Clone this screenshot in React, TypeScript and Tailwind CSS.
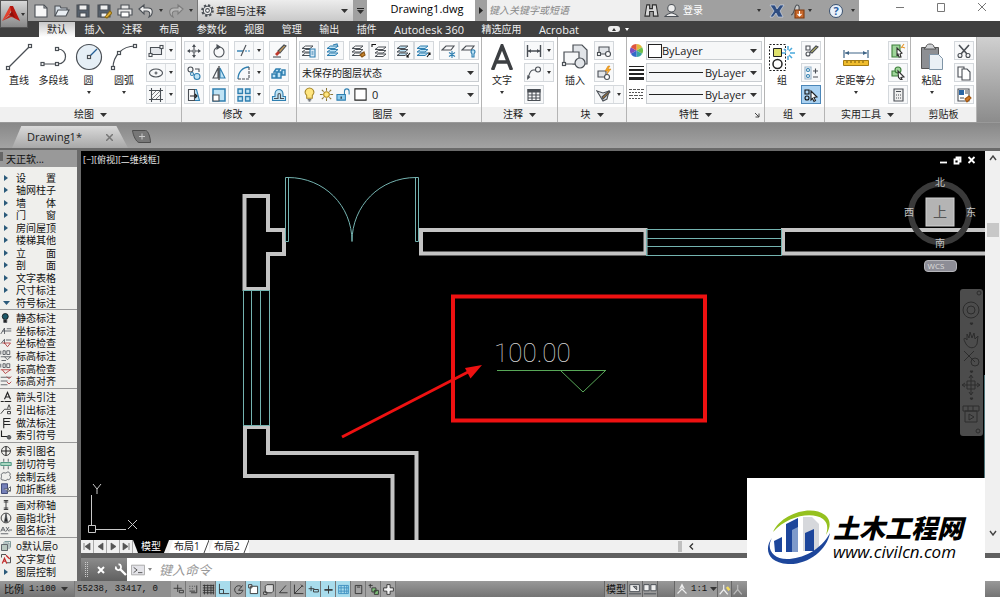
import type { ReactNode } from 'react';
import clsx from 'clsx';

const MENU = ['设　　置', '轴网柱子', '墙　　体', '门　　窗', '房间屋顶', '楼梯其他', '立　　面', '剖　　面', '文字表格', '尺寸标注', '符号标注'];

const INK = '#4a4f55';
const BLUE = '#2f7fb0';
const PALE = '#bfe3f5';

type IconProps = { children: ReactNode; size?: number; className?: string };

const Icon = ({ children, size = 16, className }: IconProps) => (
  <svg
    width={size}
    height={size}
    viewBox="0 0 16 16"
    fill="none"
    stroke={INK}
    strokeWidth={1.1}
    aria-hidden="true"
    className={clsx('shrink-0', className)}
  >
    {children}
  </svg>
);

const Caret = ({ className = 'text-[#333]' }: { className?: string }) => (
  <svg width="7" height="4" viewBox="0 0 7 4" aria-hidden="true" className={clsx('shrink-0', className)}>
    <path d="M0 0h7L3.5 4z" fill="currentColor" />
  </svg>
);

const TinyCaret = ({ className = 'text-[#333]' }: { className?: string }) => (
  <svg width="4" height="3" viewBox="0 0 4 3" aria-hidden="true" className={clsx('shrink-0', className)}>
    <path d="M0 0h4L2 3z" fill="currentColor" />
  </svg>
);

const Layers = ({ fill = '#fff', stroke = INK }: { fill?: string; stroke?: string }) => (
  <g stroke={stroke} fill={fill} strokeWidth={1}>
    <path d="M1 12.500 4.500 10H12l-3 2.500z" />
    <path d="M1 9 4.500 6.500H12L9 9z" />
    <path d="M1 5.500 4.500 3H12L9 5.500z" />
  </g>
);

/* ---------- ribbon building blocks ---------- */

const Panel = ({ title, width, children, more = true, corner = false }: { title: string; width: string; children: ReactNode; more?: boolean; corner?: boolean }) => (
  <section className={clsx('flex shrink-0 flex-col border-r border-[#b4b4b4] bg-white', width)}>
    <div className="flex h-[70px] gap-1 px-[2px] pt-1">{children}</div>
    <button type="button" className="relative flex h-[15px] items-center justify-center gap-[6px] bg-[#f0f0f0] text-[10px] leading-[15px]">
      {title}
      {more && <Caret />}
      {corner && (
        <svg width="6" height="6" viewBox="0 0 6 6" className="absolute right-1" fill="none" stroke="#444" aria-hidden="true">
          <path d="M1 1l4 4M5 1.500V5H1.500" />
        </svg>
      )}
    </button>
  </section>
);

const BigButton = ({ label, icon, width, caret = false }: { label: string; icon: ReactNode; width: string; caret?: boolean }) => (
  <button type="button" className={clsx('flex shrink-0 flex-col items-center whitespace-nowrap', width)}>
    <span className="flex h-[32px] items-center">{icon}</span>
    <span className="text-[10px] leading-[14px]">{label}</span>
    {caret && <TinyCaret className="mt-1 text-[#333]" />}
  </button>
);

const Tool = ({ label, icon, caret = false, active = false }: { label: string; icon: ReactNode; caret?: boolean; active?: boolean }) => (
  <button
    type="button"
    aria-label={label}
    className={clsx(
      'flex h-[19px] shrink-0 border',
      active ? 'border-[#4b86b8] bg-[#a9d1f1]' : 'border-[#d4d8dc] bg-[#f8f9fa]',
    )}
  >
    <span className="flex h-full w-[18px] items-center justify-center">{icon}</span>
    {caret && (
      <span className="flex h-full w-[10px] items-center justify-center border-l border-[#dcdfe2]">
        <TinyCaret />
      </span>
    )}
  </button>
);

const Column = ({ children }: { children: ReactNode }) => <div className="flex flex-col items-start gap-[3px]">{children}</div>;

const Combo = ({ label, value, before, className }: { label: string; value: string; before?: ReactNode; className?: string }) => (
  <label className={clsx('flex h-[19px] items-center border border-[#c9cdd1] bg-[#f6f7f8] pr-1', className)}>
    {before}
    <select
      aria-label={label}
      className={clsx(
        'min-w-0 flex-1 appearance-none bg-transparent leading-[16px] outline-none',
        value.charCodeAt(0) < 128 ? 'text-[11px]' : 'text-[10px]',
      )}
    >
      <option>{value}</option>
    </select>
    <Caret />
  </label>
);

const Knob = ({ x, y }: { x: number; y: number }) => <rect x={x - 1.5} y={y - 1.5} width="3" height="3" fill="#fff" />;

const DrawPanel = () => (
  <Panel title="绘图" width="w-[182px]">
    <div className="flex">
      <BigButton
        label="直线"
        width="w-[34px]"
        icon={
          <svg width="28" height="28" fill="none" stroke={INK} strokeWidth="1.200" aria-hidden="true">
            <path d="M3 25 25 3" />
            <Knob x={3} y={25} />
            <Knob x={25} y={3} />
          </svg>
        }
      />
      <BigButton
        label="多段线"
        width="w-[35px]"
        icon={
          <svg width="28" height="28" fill="none" stroke={INK} strokeWidth="1.200" aria-hidden="true">
            <path d="M2 21h16c10 0 10-15 0-15" />
            <Knob x={2.5} y={21} />
            <Knob x={17} y={21} />
            <Knob x={17} y={6} />
          </svg>
        }
      />
      <BigButton
        label="圆"
        width="w-[35px]"
        caret
        icon={
          <svg width="28" height="28" fill="none" stroke={INK} strokeWidth="1.200" aria-hidden="true">
            <circle cx="14" cy="14" r="12.500" fill="#e6eff6" />
            <path d="m14 14 8-8" stroke="#245f96" />
            <Knob x={14} y={14} />
          </svg>
        }
      />
      <BigButton
        label="圆弧"
        width="w-[36px]"
        caret
        icon={
          <svg width="28" height="28" fill="none" stroke={INK} strokeWidth="1.200" aria-hidden="true">
            <path d="M3 25C3 13 12 3 25 3" />
            <Knob x={3} y={25} />
            <Knob x={9} y={10} />
            <Knob x={25} y={3} />
          </svg>
        }
      />
    </div>
    <Column>
      <Tool label="矩形" caret icon={<Icon><path d="M2.500 4.500h11v7h-11z" fill="#e3e6ea" /><Knob x={2.5} y={12} /><Knob x={13.5} y={4} /></Icon>} />
      <Tool label="椭圆" caret icon={<Icon><ellipse cx="8" cy="8" rx="6.500" ry="4" /><path d="M8 6.500v3M6.500 8h3" /></Icon>} />
      <Tool label="图案填充" caret icon={<Icon><path d="M1 3.500h14M1 12.500h14M3.500 1v14M12.500 1v14" /><path d="m4 8 4-4M4 12l8-8M8 12l4-4" strokeWidth=".7" /></Icon>} />
    </Column>
  </Panel>
);

const ModifyPanel = () => (
  <Panel title="修改" width="w-[115px]">
    <div className="flex gap-[5px]">
      <Column>
        <Tool label="移动" icon={<Icon><path d="M8 2v12M2 8h12" strokeDasharray="4 4" /><path d="M8 1 6 4h4zM8 15l-2-3h4zM1 8l3-2v4zM15 8l-3-2v4z" fill={INK} stroke="none" /><circle cx="8" cy="8" r="1.300" /></Icon>} />
        <Tool label="复制" icon={<Icon><circle cx="4.500" cy="4.500" r="2.500" /><circle cx="6" cy="9" r="1.500" stroke={BLUE} /><circle cx="11" cy="11.500" r="3" stroke={BLUE} fill={PALE} /><path d="M9 4h4v3" /></Icon>} />
        <Tool label="拉伸" icon={<Icon><path d="M8.500 2.500h2l3 11h-5" stroke={BLUE} fill={PALE} /><path d="M2.500 2.500h6v11h-6z" /><path d="M4 9h7M9 7l2 2-2 2" stroke="#222" /></Icon>} />
      </Column>
      <Column>
        <Tool label="旋转" icon={<Icon><circle cx="8" cy="9" r="5" /><path d="m6 2 3 2-3 2z" fill={INK} /></Icon>} />
        <Tool label="镜像" icon={<Icon><path d="M7 3v10H2z" /><path d="M9 3v10h5z" stroke={BLUE} fill={PALE} /><path d="M8 1v14" stroke="#222" /></Icon>} />
        <Tool label="缩放" icon={<Icon><path d="M2 2h12v12H2z" fill={PALE} stroke={BLUE} strokeWidth="1.500" /><path d="M2 8h6v6H2z" fill="#fff" /></Icon>} />
      </Column>
      <Column>
        <Tool label="修剪" caret icon={<Icon><path d="M1 8h6" stroke={BLUE} strokeWidth="1.400" /><path d="M9 8h6" stroke={BLUE} strokeDasharray="2 1" /><path d="m5 13 5-11" /></Icon>} />
        <Tool label="圆角" caret icon={<Icon><path d="M2 14C2 7 7 2 13 2" stroke={BLUE} strokeWidth="1.400" /><path d="M13 2v12H2" strokeDasharray="3 1" /></Icon>} />
        <Tool label="阵列" caret icon={<Icon><path d="M2 2h4.500v4.500H2zM2 9.500h4.500V14H2zM9.500 9.500H14V14H9.500zM9.500 2H14v4.500H9.500z" fill={PALE} stroke={BLUE} strokeWidth="1.400" /></Icon>} />
      </Column>
      <Column>
        <Tool label="删除" icon={<Icon><path d="m7 8 6-6 2 1-6 7z" fill="#c39a5b" /><path d="m4 11 3-3 2 2-3 3z" fill="#c0392b" stroke="none" /><path d="M2 14h8" /></Icon>} />
        <Tool label="分解" icon={<Icon><path d="M1 9h4v4H1zM6 7h4v6H6zM11 5h3v5h-3zM3 7l2-3h4l-2 3z" fill={PALE} stroke={BLUE} strokeWidth="1.400" /></Icon>} />
        <Tool label="偏移" icon={<Icon><path d="M1.500 13.500h13v-4H12V7c0-6-8-6-8 0v2.500H1.500z" fill={PALE} stroke={BLUE} /><path d="M3 11.500h4V8c0-2 2.500-2 2.500 0v3.500H13" stroke={INK} /></Icon>} />
      </Column>
    </div>
  </Panel>
);

const LayerPanel = () => (
  <Panel title="图层" width="w-[185px]">
    <div className="flex min-w-0 flex-1 flex-col gap-[3px]">
      <div className="flex justify-between">
        <Tool label="图层特性" icon={<Icon><Layers /><path d="M9 6h5v8H9z" fill="#dbe9f5" stroke={BLUE} /><path d="M10.500 9h2M10.500 11h2" stroke={BLUE} /></Icon>} />
        <Tool label="置为当前" icon={<Icon><Layers fill={PALE} stroke={BLUE} /><path d="m7 2 4-1 1 3" stroke={BLUE} /></Icon>} />
        <div className="flex">
          <Tool label="匹配图层" icon={<Icon><Layers /><path d="m9 12 4-3 1 3-3 2z" fill="#c9852c" stroke="#8a5514" /></Icon>} />
          <Tool label="上一个" icon={<Icon><g transform="translate(3 1)"><Layers /></g><path d="M1 1.500h4M1 1v3" stroke="#111" /></Icon>} />
        </div>
        <div className="flex">
          <Tool label="隔离" icon={<Icon><Layers fill={PALE} /><path d="m14 10-3 4M11 12v2h2" stroke="#111" /></Icon>} />
          <Tool label="取消隔离" icon={<Icon><Layers fill={PALE} stroke={BLUE} /><path d="m11 14 3-4M14 12v-2h-2" stroke="#111" /></Icon>} />
        </div>
        <div className="flex">
          <Tool label="冻结" icon={<Icon><path d="M1 7 5 3h8l-3 4z" /><path d="M11 8v7M8 9.500l6 4M14 9.500l-6 4" stroke={BLUE} /></Icon>} />
          <Tool label="关闭" icon={<Icon><path d="M1 7 5 3h8l-3 4z" /><path d="M10 9c0-3 4-3 4 0l-1 2v3h-2v-3z" fill={PALE} stroke={BLUE} /></Icon>} />
        </div>
      </div>
      <Combo label="图层状态" value="未保存的图层状态" className="pl-[2px]" />
      <Combo
        label="图层"
        value="0"
        className="pl-[2px]"
        before={
          <span className="mr-1 flex gap-[2px]">
            <Icon size={15}><path d="M5 9c-4-4 0-8 3-8s7 4 3 8v3H5z" fill="#ffe680" stroke="#a8892b" /><path d="M6 13.500h4M7 15h2" /></Icon>
            <Icon size={15}><circle cx="8" cy="8" r="3" fill="#ffe680" stroke="#b38b1d" /><path d="M8 1v3M8 12v3M1 8h3M12 8h3M3 3l2 2M11 11l2 2M13 3l-2 2M3 13l2-2" stroke="#8a7636" /></Icon>
            <Icon size={15}><path d="M1 8h9v6H1z" fill="#8ccbed" stroke={BLUE} /><path d="M9 8V5c0-4 5-4 5 0v3" stroke={BLUE} /><path d="M5.500 10v2.500" stroke="#111" /></Icon>
            <Icon size={15}><path d="M2 2h12v12H2z" fill="#fff" stroke="#222" /></Icon>
          </span>
        }
      />
    </div>
  </Panel>
);

const AnnotatePanel = () => (
  <Panel title="注释" width="w-[76px]">
    <BigButton
      label="文字"
      width="w-[36px]"
      caret
      icon={
        <svg width="22" height="26" viewBox="0 0 22 26" fill="none" stroke="#3c3f42" strokeWidth="3.500" aria-hidden="true">
          <path d="M1.500 26 11 2l9.500 24M5 18h12" />
        </svg>
      }
    />
    <Column>
      <Tool label="线性" caret icon={<Icon><path d="M1.500 2v12M14.500 2v12M2 8h12" strokeWidth="1.400" /><path d="m2 8 3-2v4zM14 8l-3-2v4z" fill={INK} stroke="none" /></Icon>} />
      <Tool label="引线" caret icon={<Icon><circle cx="12" cy="4.500" r="2.500" /><path d="M9.500 5H7c-3 0-4 5-5 8" /><path d="m1 15 .500-5 3 2z" fill={INK} stroke="none" /></Icon>} />
      <Tool label="表格" icon={<Icon><path d="M2 2.500h12v11H2zM2 8h12M2 11h12M6 5v8M10 5v8" /><path d="M2 2.500h12V5H2z" fill={INK} /></Icon>} />
    </Column>
  </Panel>
);

const BlockPanel = () => (
  <Panel title="块" width="w-[69px]">
    <BigButton
      label="插入"
      width="w-[30px]"
      icon={
        <svg width="28" height="28" fill="none" stroke={INK} strokeWidth="1.200" aria-hidden="true">
          <path d="M12 2h9l5 5v14H12z" fill="#e1e4e8" />
          <path d="M3 9h15v12H3z" fill="#f6f7f8" />
          <circle cx="19" cy="20" r="5" fill="#e1e4e8" />
          <Knob x={3} y={21} />
        </svg>
      }
    />
    <Column>
      <Tool label="创建" icon={<Icon><path d="M3 4h10v7H3z" fill="#e1e4e8" /><circle cx="12" cy="11" r="2.500" fill="#fff" /><Knob x={3} y={11} /></Icon>} />
      <Tool label="编辑" icon={<Icon><path d="M2 6h8v6H2z" fill="#e1e4e8" /><circle cx="11" cy="12" r="2.500" fill="#fff" /><path d="m12 1-3 5h3l-1 3 4-5h-3l2-3z" fill="#f5a623" stroke="#d07f10" strokeWidth=".5" /></Icon>} />
      <Tool label="编辑属性" caret icon={<Icon><path d="m1 4 6 2 6-2-2 8-4 2-3-5z" fill="#e1e4e8" /><path d="m6 10 7-6 1 1-7 7z" fill="#c9852c" /></Icon>} />
    </Column>
  </Panel>
);

const PropertiesPanel = () => (
  <Panel title="特性" width="w-[138px]" corner>
    <div className="flex min-w-0 flex-1 flex-col gap-[3px]">
      <div className="flex items-center gap-[2px]">
        <svg width="15" height="15" viewBox="0 0 16 16" aria-hidden="true" className="shrink-0">
          <path d="M8 8V1a7 7 0 0 1 6 3.500z" fill="#e2b93b" />
          <path d="m8 8 6-3.500a7 7 0 0 1 0 7z" fill="#6fbf4b" />
          <path d="m8 8 6 3.500A7 7 0 0 1 8 15z" fill="#38a3a5" />
          <path d="M8 8v7a7 7 0 0 1-6-3.500z" fill="#3369c9" />
          <path d="m8 8-6 3.500a7 7 0 0 1 0-7z" fill="#7c4fc0" />
          <path d="M8 8 2 4.500A7 7 0 0 1 8 1z" fill="#e0553c" />
        </svg>
        <Combo label="对象颜色" value="ByLayer" className="min-w-0 flex-1" before={<span className="ml-[1px] size-[14px] border border-[#222] bg-white" />} />
      </div>
      <div className="flex items-center gap-[2px]">
        <svg width="15" height="15" aria-hidden="true" className="shrink-0" fill="#222">
          <path d="M0 1h15v1H0zM0 4h15v2H0zM0 8h15v2H0zM0 12h15v3H0z" />
        </svg>
        <Combo label="线宽" value="ByLayer" className="min-w-0 flex-1" before={<span className="mx-[2px] h-px w-[54px] bg-[#222]" />} />
      </div>
      <div className="flex items-center gap-[2px]">
        <svg width="15" height="15" aria-hidden="true" className="shrink-0" stroke="#555">
          <path d="M0 2.500h15" strokeDasharray="3 1" />
          <path d="M0 5.500h15" strokeDasharray="2 1" />
          <path d="M0 8.500h15" strokeDasharray="4 1" />
          <path d="M0 11.500h15" strokeDasharray="2 1" />
        </svg>
        <Combo label="线型" value="ByLayer" className="min-w-0 flex-1" before={<span className="mx-[2px] h-px w-[54px] bg-[#222]" />} />
      </div>
    </div>
  </Panel>
);

const GroupPanel = () => (
  <Panel title="组" width="w-[60px]">
    <BigButton
      label="组"
      width="w-[30px]"
      icon={
        <svg width="30" height="30" fill="none" stroke="#222" aria-hidden="true">
          <path d="M2.500 2.500h16v26h-16z" strokeDasharray="2 1.500" />
          <path d="M6.500 6.500h8v8h-8z" fill="#dfe16b" />
          <circle cx="10.500" cy="22" r="4.500" strokeWidth="1.500" />
          <path d="M21 4v4M21 14v4M15 11h4M23 11h5M17 7l2 2M25 6l-3 3M25 16l-3-3" stroke="#4aa9dc" strokeWidth="1.500" />
        </svg>
      }
    />
    <Column>
      <Tool label="取消编组" icon={<Icon><path d="M3 3h4v4H3z" /><circle cx="5" cy="11" r="2" /><path d="m7 9 6-6 2 1-6 6z" fill="#c5c06a" /></Icon>} />
      <Tool label="组编辑" icon={<Icon><path d="M2 2h6v12H2z" stroke="#9bb5c9" /><circle cx="5" cy="5" r="1.500" stroke={BLUE} /><circle cx="5" cy="11" r="1.500" stroke={BLUE} /><path d="M10 6h5M12.500 3.500v5M10 12h5" /></Icon>} />
      <Tool label="启用组选择" active icon={<Icon><path d="M2 3h4v4H2z" stroke="#111" /><circle cx="4" cy="11" r="2" stroke="#111" /><path d="m8 4 6 6-3 .500 1.500 3-1.500 1-1.500-3L8 13z" fill="#fff" stroke="#222" /></Icon>} />
    </Column>
  </Panel>
);

const UtilityPanel = () => (
  <Panel title="实用工具" width="w-[86px]">
    <BigButton
      label="定距等分"
      width="w-[57px]"
      caret
      icon={
        <svg width="26" height="20" fill="none" stroke="#3f6587" aria-hidden="true">
          <path d="M1 3v8M25 3v8M2 6h22" strokeWidth="1.200" />
          <path d="m2 6 4-2v4zM24 6l-4-2v4z" fill="#3f6587" stroke="none" />
          <path d="M.5 13.500h25v5H.5z" fill="#f0bd2d" stroke="#a57c12" />
          <path d="M4 14v2M8 14v2M12 14v2M16 14v2M20 14v2" stroke="#7a5a07" />
        </svg>
      }
    />
    <Column>
      <Tool label="快速选择" icon={<Icon><path d="M2 2h8v12H2z" fill="#9fd59a" stroke="#3d7f3a" /><path d="m7 5 5 5-2 1 1 3-2 0-1-3-1 1z" fill="#fff" stroke="#333" /><path d="m14 1-3 4M15 5l-3-1" stroke="#e5962a" /></Icon>} />
      <Tool label="选择全部" icon={<Icon><path d="M2 6h7v5H2z" fill="#9fd59a" stroke="#3d7f3a" /><circle cx="8" cy="5" r="3" fill="#9fd59a" stroke="#3d7f3a" /><path d="m8 6 6 6-3 .500 1 2-1.500 0-2-2z" fill="#fff" stroke="#333" /></Icon>} />
      <Tool label="计算器" icon={<Icon><path d="M4 2h9v12H4zM6 4.500h5M6 8h1M8 8h1M10 8h1M6 11h1M8 11h1M10 11h1" fill="#eee" /></Icon>} />
    </Column>
  </Panel>
);

const ClipboardPanel = () => (
  <Panel title="剪贴板" width="w-[66px]" more={false}>
    <BigButton
      label="粘贴"
      width="w-[37px]"
      caret
      icon={
        <svg width="24" height="28" fill="none" stroke="#555" aria-hidden="true">
          <path d="M1.500 4.500h17v21h-17z" fill="#8d8f93" />
          <path d="M6 4c0-4 8-4 8 0l2 2H4z" fill="#d0d2d5" />
          <path d="M9.500 11.500h9l4 4v11h-13z" fill="#eaf0f5" stroke="#7f94a6" />
        </svg>
      }
    />
    <Column>
      <Tool label="剪切" icon={<Icon><path d="m3 2 8 9M13 2l-8 9" strokeWidth="1.600" /><circle cx="4" cy="12.500" r="2" /><circle cx="12" cy="12.500" r="2" /></Icon>} />
      <Tool label="复制剪裁" icon={<Icon><path d="M2 2h6v10H2z" fill="#fff" /><path d="M6 4h5l3 3v8H6z" fill="#fff" /></Icon>} />
      <Tool label="选择性粘贴" icon={<Icon><path d="M2 2h11v12H2z" fill="#fff" /><path d="M3 3h5v5H3z" fill="#2865a5" stroke="none" /><path d="M9 4h3M9 6h3M4 11h4" /><path d="m9 12 4-3 2 2-4 4z" fill="#d17b2a" stroke="#a1560f" /></Icon>} />
    </Column>
  </Panel>
);

/* ---------- title bar ---------- */

const QuickButton = ({ label, children }: { label: string; children: ReactNode }) => (
  <button type="button" aria-label={label} className="flex shrink-0 items-center">{children}</button>
);

const TitleBar = () => (
  <header className="flex h-[21px] bg-[#a0a0a0] pl-[33px]">
    <div className="flex w-[164px] shrink-0 items-center gap-[5px]">
      <QuickButton label="新建"><Icon><path d="M2 2h9l3 3v9H2z" fill="#f7f7f7" /><path d="M11 2v3h3" /></Icon></QuickButton>
      <QuickButton label="打开"><Icon><path d="M1 13V3h5l1 2h6v2" fill="#d5dde5" /><path d="m1 13 3-6h11l-3 6z" fill="#e9eef3" /></Icon></QuickButton>
      <QuickButton label="保存"><Icon><path d="M2 2h12v12H2z" fill="#56606c" /><path d="M4 2h8v5H4zM5 10h6v4H5z" fill="#f1f1f1" /></Icon></QuickButton>
      <QuickButton label="另存为"><Icon><path d="M2 2h12v12H2z" fill="#56606c" /><path d="M4 2h8v5H4zM5 10h6v4H5z" fill="#f1f1f1" /><path d="m9 14 5-6 2 2-5 5z" fill="#e7b53c" stroke="#8c6a14" /></Icon></QuickButton>
      <QuickButton label="打印"><Icon><path d="M4 2h8v4H4zM1 6h14v6H1z" fill="#e8e8e8" /><path d="M4 9h8v5H4z" fill="#fff" /></Icon></QuickButton>
      <QuickButton label="放弃"><Icon><path d="m1 6 5-4v3h4c6 0 5 7 1 9 2-4 0-6-2-6H6v3z" fill="#eee" /></Icon></QuickButton>
      <TinyCaret />
      <QuickButton label="重做"><Icon><path d="m15 6-5-4v3H6c-6 0-5 7-1 9-2-4 0-6 2-6h3v3z" fill="#b8b8b8" stroke="#7c7c7c" /></Icon></QuickButton>
      <TinyCaret />
    </div>
    <label className="flex w-[156px] shrink-0 items-center gap-[1px] border-l border-[#777] bg-linear-to-b from-[#ededed] to-[#c9c9c9] pr-[5px] pl-[2px]">
      <Icon size={15}>
        <circle cx="8" cy="8" r="5.500" strokeWidth="2.500" strokeDasharray="2.300 2" />
        <circle cx="8" cy="8" r="4.500" fill="#eee" />
        <circle cx="8" cy="8" r="2" fill="#fff" />
      </Icon>
      <select aria-label="工作空间" className="min-w-0 flex-1 appearance-none bg-transparent text-[10px] leading-[16px] outline-none">
        <option>草图与注释</option>
      </select>
      <Caret />
    </label>
    <button type="button" aria-label="自定义快速访问工具栏" className="flex w-[14px] shrink-0 flex-col items-center justify-center gap-[1px]">
      <span className="h-px w-[7px] bg-[#222]" />
      <Caret />
    </button>
    <h1 className="w-[108px] shrink-0 bg-white pl-3 text-center text-[11px] leading-[17px] text-black">Drawing1.dwg</h1>
    <button type="button" aria-label="展开搜索" className="flex w-[12px] shrink-0 items-center justify-center">
      <svg width="4" height="7" viewBox="0 0 4 7" aria-hidden="true"><path d="M0 0v7l4-3.500z" fill="#222" /></svg>
    </button>
    <input
      type="text"
      aria-label="搜索"
      placeholder="键入关键字或短语"
      className="w-[153px] shrink-0 bg-[#f0f0f0] px-[2px] text-[10px] italic outline-none placeholder:text-[#888]"
    />
    <div className="flex min-w-0 flex-1 items-center pl-1">
      <QuickButton label="查找"><Icon size={15}><path d="M3 2h3v4h3V2h4l2 12h-5V9H6v5H1z" fill="#d8d8d8" stroke="#2b2b2b" /></Icon></QuickButton>
      <button type="button" className="ml-[5px] flex items-center gap-1 text-[10px] text-white">
        <Icon size={15}><circle cx="8" cy="5.500" r="4" fill="#eee" /><path d="M1 14.500c2-3 4-3 7-4 3 1 5 1 7 4z" fill="#eee" /></Icon>
        登录
      </button>
      <div className="ml-auto flex items-center pr-1">
        <TinyCaret />
        <QuickButton label="应用商店"><Icon size={16} className="ml-2"><path d="M1 2h5l2 4 3-4h4l-4 6 3 6H9l-2-4-3 4H1l4-6z" fill="#2f4d80" stroke="#dbe4f3" strokeWidth=".6" /></Icon></QuickButton>
        <QuickButton label="保持连接"><Icon size={16} className="ml-1"><path d="M2 12c4 0 3-10 6-10s2 4 2 5" fill="#ccc" /><path d="M6 7h9v8H6z" fill="#c9682b" stroke="#7e3b10" /><path d="M10.500 8v5M8.500 11l2 2 2-2" stroke="#fff" /></Icon></QuickButton>
        <TinyCaret className="ml-[3px] text-[#333]" />
        <QuickButton label="帮助">
          <span className="ml-[17px] flex size-[14px] items-center justify-center rounded-full border border-[#39506e] bg-[#e9f1fa] text-[11px] leading-none font-bold text-[#2b5fa3]">?</span>
        </QuickButton>
        <TinyCaret className="ml-2 text-[#333]" />
      </div>
    </div>
    <div className="flex w-[141px] shrink-0 justify-between bg-white pt-[1px] pr-[13px] pl-[36px] text-[#777]">
      {[
        ['最小化', 'M1 5.500h8'],
        ['最大化', 'M1.500 1.500h7v8h-7z'],
        ['关闭', 'm1 1 8 8M9 1l-8 8'],
      ].map(([label, d]) => (
        <button key={label} type="button" aria-label={label} className="h-[12px]">
          <svg width="10" height="11" fill="none" stroke="currentColor" aria-hidden="true"><path d={d} /></svg>
        </button>
      ))}
    </div>
  </header>
);

const TABS = ['默认', '插入', '注释', '布局', '参数化', '视图', '管理', '输出', '插件', 'Autodesk 360', '精选应用', 'Acrobat'];

const RibbonTabs = () => (
  <nav className="flex h-4 items-end bg-[#404040] pl-[39px]">
    <div className="flex w-[548px] shrink-0 justify-between">
      {TABS.map((tab, i) => (
        <button
          key={tab}
          type="button"
          className={clsx(
            'h-[15px] px-2 whitespace-nowrap leading-[15px]',
            tab.charCodeAt(0) < 128 ? 'text-[11px]' : 'text-[10px]',
            i === 0 ? 'bg-linear-to-b from-[#c8c8c8] to-white text-[#222]' : 'text-[#f0f0f0]',
          )}
        >
          {tab}
        </button>
      ))}
    </div>
    <button type="button" aria-label="最小化面板" className="ml-[21px] flex h-[16px] items-center gap-[5px]">
      <span className="flex h-[6px] w-[12px] items-center justify-center rounded-sm bg-[#eee]">
        <TinyCaret className="rotate-180 text-[#333]" />
      </span>
      <TinyCaret className="text-white" />
    </button>
  </nav>
);

/* ---------- left tool palette ---------- */

type Item = { name: string; icon: ReactNode };

const teal = '#1e5a6a';

const GROUPS: { height: string; items: Item[] }[] = [
  {
    height: 'h-[79px]',
    items: [
      { name: '静态标注', icon: <><circle cx="7" cy="6" r="4" fill={teal} stroke="#111" /><path d="M5 10h4v4H5z" fill="#222" /></> },
      { name: '坐标标注', icon: <path d="M1 12 6 4v8M3 8h12M9 5h6" /> },
      { name: '坐标检查', icon: <><path d="M1 9l5-6v6M8 4h7" /><path d="M3 8h11l-4 5-4-5" stroke="#b03030" /></> },
      { name: '标高标注', icon: <path d="M1 1v5M4 1h3v5H4zM9 1h4v5H9zM1 9h14M6 9l4 4 4-4M2 14h6" /> },
      { name: '标高检查', icon: <><path d="M1 1v5M4 1h3v5H4zM9 1h4v5H9z" /><path d="M1 9h14M3 9l4 5 7-5" stroke="#b03030" /></> },
      { name: '标高对齐', icon: <><path d="M1 3h13M1 8h9M1 13h9" /><path d="m9 2 3 3 3-3M9 9l3 3 3-3" stroke="#b03030" /></> },
    ],
  },
  {
    height: 'h-[54px]',
    items: [
      { name: '箭头引注', icon: <path d="M1 14h4M6 11l4-9 4 9M7 8h6M6 14h9" stroke="#222" strokeWidth="1.500" /> },
      { name: '引出标注', icon: <path d="M1 13 6 7h8M10 6l2-5 2 5M10 10h4v3h-4z" stroke="#222" /> },
      { name: '做法标注', icon: <path d="M5 15V2h9M5 6h8M5 10h9" stroke="#222" strokeWidth="1.400" /> },
      { name: '索引符号', icon: <><path d="M2 2v8h8" stroke="#222" strokeWidth="1.500" /><circle cx="12" cy="11" r="2.500" fill="#666" /></> },
    ],
  },
  {
    height: 'h-[54px]',
    items: [
      { name: '索引图名', icon: <><circle cx="8" cy="8" r="6" stroke="#222" /><path d="M2 8h12M8 2v12" stroke="#222" strokeWidth="1.500" /></> },
      { name: '剖切符号', icon: <><path d="M1 6h14v4H1z" fill="#a9d6c0" stroke="#3c8a74" /><path d="M5 1v4M11 1v4M5 11v4M11 11v4" /></> },
      { name: '绘制云线', icon: <path d="M3 3c3-2 4 1 6-1s6 1 4 4c3 3-1 7-3 5-2 3-5 1-6 1-4 0-2-3-2-5S1 5 3 3z" /> },
      { name: '加折断线', icon: <><path d="M2 1h8v13H2z" fill="#7580b8" stroke="#2d3769" /><path d="M5 8h6l-2 3h4M10 8l4-3v6z" fill="#fff" /></> },
    ],
  },
  {
    height: 'h-[41px]',
    items: [
      { name: '画对称轴', icon: <path d="M8 2v12M5 2h6M5 14h6M5 4h6M5 12h6" stroke="#222" /> },
      { name: '画指北针', icon: <><circle cx="8" cy="8" r="6.500" stroke="#222" /><path d="M8 2 6 13h4z" fill="#222" /></> },
      { name: '图名标注', icon: <path d="m1 10 3-6 3 6M2 8h4M8 4l4 6M12 4 8 10M12 8h4M1 13h10" /> },
    ],
  },
  {
    height: 'h-[29px]',
    items: [
      { name: 'o默认层o', icon: <><path d="M2 6h8v8H2z" fill="#b9c8c0" /><path d="M4 4h8v8M6 2h8v8" stroke="#6a8a8a" /></> },
      { name: '文字复位', icon: <><path d="M2 6V2h6M14 5v8H8" stroke="#333" /><path d="m3 14 3-7 3 7M4 11h4M8 3l5 5" stroke="#c22a2a" strokeWidth="1.600" /></> },
    ],
  },
];

const Arrow = ({ down = false }: { down?: boolean }) => (
  <svg width="8" height="8" viewBox="0 0 8 8" fill="#2b5a7a" aria-hidden="true" className="mr-[6px] ml-[2px] shrink-0">
    <path d={down ? 'M1 2h7L4.500 6z' : 'M2 1v6l4-3z'} />
  </svg>
);

const Palette = () => (
  <aside className="flex w-[77px] shrink-0 flex-col bg-[#efefec] text-[10px] leading-[12px] text-[#111]">
    <h2 className="flex h-[17px] items-center gap-[3px] bg-[#999]">
      <span className="mb-1 h-[9px] w-[3px] bg-[#666]" />
      天正软...
    </h2>
    <ul className="flex h-[142px] flex-col pt-[5px]">
      {MENU.map((name, i) => (
        <li key={name} className="min-h-0 flex-1">
          <button type="button" className="flex items-center whitespace-pre">
            <Arrow down={i === MENU.length - 1} />
            {name}
          </button>
        </li>
      ))}
    </ul>
    {GROUPS.map((group, i) => (
      <ul key={i} className={clsx('flex flex-col border-t border-[#9a9a9a] pt-[2px]', group.height)}>
        {group.items.map((item) => (
          <li key={item.name} className="min-h-0 flex-1">
            <button type="button" className="flex items-center gap-1 whitespace-nowrap">
              <Icon size={12}>{item.icon}</Icon>
              {item.name}
            </button>
          </li>
        ))}
      </ul>
    ))}
    <button type="button" className="flex items-center">
      <Arrow />
      图层控制
    </button>
  </aside>
);

/* ---------- model space ---------- */

const Plan = () => (
  <svg className="absolute inset-0 h-full w-full" fill="none" aria-label="建筑平面图">
    {/* origin of the drawing is the corner of the application window */}
    <g transform="translate(-81 -151)">
      <g stroke="#c4c4c4" strokeWidth="4">
        <path d="M244.500 196H268v34h16v24h-16v35h-23.500z" />
        <path d="M421 230h224.500v23.500H421zM1200 230H783v23.500h417" />
        <path d="M392.500 700V476H245v-49h23v26h148.500v247" />
      </g>
      <g stroke="#74b3b0">
        <path d="M285.500 177.500h3v64h-3zM415.500 177.500h3v64h-3z" />
        <path d="M288 177.500c36 0 64 28 64 64M416 177.500c-36 0-64 28-64 64" />
        <path d="M646.500 229.500h135M646.500 238.500h135M646.500 246.500h135M646.500 255.500h135M646.500 229v27M781.500 229v27" />
        <path d="M243.500 291v134M251.500 291v134M260.500 291v134M269.500 291v134M243 290.500h27M243 425.500h27" />
        <path d="M984.500 375v133" stroke="#4f7378" />
      </g>
      <g stroke="#58a858">
        <path d="M497 370.500h109M561 371l22 21 22-21" />
      </g>
      <text x="494" y="362" fill="#d8d8d8" className="font-['Roboto',sans-serif] text-[26px] font-thin">
        100.00
      </text>
      <rect x="453" y="296.500" width="252" height="124" stroke="#ee1111" strokeWidth="4" />
      <path d="m342 437 128-66" stroke="#ee1111" strokeWidth="3" />
      <path d="m482 365-11.500 13.500-5.500-10.500z" fill="#ee1111" />
    </g>
  </svg>
);

const Ucs = () => (
  <svg width="60" height="58" className="absolute bottom-0 left-1" fill="none" stroke="#c8c8c8" aria-hidden="true">
    <path d="M3.500 50.500h7v-7h-7zM6.500 43V13M11 47.500h30M43 38l9 9M52 38l-9 9M8 2l4 5 4-5M12 7v5" />
  </svg>
);

const ViewCube = () => (
  <div className="absolute top-6 right-2 flex flex-col items-center gap-[11px]">
    <svg width="74" height="74" viewBox="0 0 74 74" fill="none" className="text-[10px]" aria-label="视图立方体">
      <circle cx="37" cy="38" r="29" stroke="#3a3a3a" strokeWidth="6" />
      <rect x="23" y="23" width="28" height="28" fill="#b4b4b4" stroke="#d0d0d0" />
      <g fill="#c4c4c4" textAnchor="middle">
        <text x="37" y="11">北</text>
        <text x="6" y="41">西</text>
        <text x="68" y="41">东</text>
        <text x="37" y="72">南</text>
        <text x="37" y="42" fill="#555" className="text-[14px]">上</text>
      </g>
    </svg>
    <button type="button" className="h-3 w-[33px] rounded-sm border border-[#b5b5ba] bg-[#8d8d96] pl-[3px] text-left text-[8px] leading-[10px] text-[#ddd]">
      WCS
    </button>
  </div>
);

const NavBar = () => (
  <svg width="23" height="147" className="absolute top-[138px] right-[2px]" fill="none" stroke="#2c2c2c" aria-label="导航栏">
    <rect width="23" height="147" rx="3" fill="#4c4c4c" stroke="none" />
    <circle cx="19" cy="4" r="2" />
    <circle cx="11" cy="21" r="8" />
    <circle cx="11" cy="21" r="4" />
    <path d="M5 53c-3-6 2-3 2-2v-6l2 4 1-6 2 6 2-5 1 6 3-3-1 8c-2 5-8 5-11 0z" />
    <path d="m4 62 11 11M14 62 4 72" />
    <circle cx="15" cy="73" r="4" />
    <path d="M11 87v18M3 96h16M9 89l2-3 2 3M9 103l2 3 2-3M5 94l-3 2 3 2M17 94l3 2-3 2M7 92h8v8H7z" />
    <path d="M3 117h16v5H3zM5 122h12v11H5zM9 125l5 3-5 3zM8 117v5M13 117v5" />
    <path d="m10 34 1.500 2 1.500-2zM10 82l1.500 2 1.500-2zM10 109l1.500 2 1.500-2z" fill="#2c2c2c" />
    <circle cx="18" cy="142" r="2" />
  </svg>
);

const Canvas = () => (
  <main className="relative min-h-[380px] min-w-0 flex-1 overflow-hidden bg-black">
    <Plan />
    <Ucs />
    <span className="absolute top-[2px] left-[2px] text-[9px] leading-[14px] text-[#e8e8e8]">[−][俯视][二维线框]</span>
    <div className="absolute top-1 right-2 flex gap-1 text-white">
      {[
        ['最小化', 'M1 7.500h7'],
        ['还原', 'M1.500 4.500h4v4h-4zM3.500 4V2.500h4v4H6'],
        ['关闭', 'm1.500 2 6 6M7.500 2l-6 6'],
      ].map(([label, d]) => (
        <button key={label} type="button" aria-label={label}>
          <svg width="10" height="10" fill="none" stroke="currentColor" strokeWidth="1.800" aria-hidden="true"><path d={d} /></svg>
        </button>
      ))}
    </div>
    <ViewCube />
    <NavBar />
  </main>
);

const LayoutTabs = () => (
  <div className="flex h-[13px] items-center bg-[#f0f0f0] text-[10px] leading-[13px] text-[#222]">
    <div className="flex w-[52px] shrink-0">
      {['M3 3v7M9 3v7L4 6.500z', 'M9 3v7L4 6.500z', 'M4 3v7l5-3.500z', 'M9 3v7M3 3v7l5-3.500z'].map((d, i) => (
        <button key={i} type="button" aria-label={['第一个', '上一个', '下一个', '最后一个'][i]} className="h-[13px] w-[13px] border-r border-[#aaa]">
          <svg width="12" height="13" fill="#555" stroke="#555" strokeWidth=".7" aria-hidden="true"><path d={d} /></svg>
        </button>
      ))}
    </div>
    <button type="button" className="h-[13px] w-[36px] shrink-0 bg-black text-white [clip-path:polygon(0_0,100%_0,86%_100%,14%_100%)]">模型</button>
    {['布局1', '布局2'].map((name) => (
      <button key={name} type="button" className="flex h-[13px] w-[40px] shrink-0 items-center justify-between bg-white pl-[5px] [clip-path:polygon(10%_0,100%_0,100%_100%,0_100%)]">
        {name}
        <svg width="6" height="13" stroke="#444" aria-hidden="true"><path d="m6 0-5 13" /></svg>
      </button>
    ))}
    <div className="ml-auto flex h-[11px] w-[322px] items-center border-l-4 border-[#c0c0c0] pl-[7px]">
      <button type="button" aria-label="向左滚动">
        <svg width="5" height="7" fill="none" stroke="#333" strokeWidth="1.300" aria-hidden="true"><path d="M4 .5 1 3.500l3 3" /></svg>
      </button>
    </div>
  </div>
);

const VerticalScroll = () => (
  <div className="flex w-[15px] shrink-0 flex-col items-center bg-[#f0f0f0] py-1">
    <svg width="8" height="6" fill="none" stroke="#444" strokeWidth="1.400" aria-hidden="true"><path d="m1 5 3-4 3 4" /></svg>
    <span className="mt-[62px] h-[14px] w-[12px] bg-[#c8c8c8]" />
    <svg width="8" height="6" fill="none" stroke="#444" strokeWidth="1.400" aria-hidden="true" className="mt-auto"><path d="m1 1 3 4 3-4" /></svg>
  </div>
);

const CommandLine = () => (
  <div className="flex h-[23px] bg-white">
    <div className="flex w-[46px] shrink-0 items-center gap-[9px] bg-linear-to-b from-[#8c8c8c] to-[#606060] pl-1 text-white">
      <span className="h-[15px] w-[4px] border-x border-dotted border-[#ccc]" />
      <button type="button" aria-label="关闭命令行">
        <svg width="8" height="8" stroke="currentColor" strokeWidth="2" aria-hidden="true"><path d="m1 1 6 6M7 1 1 7" /></svg>
      </button>
      <button type="button" aria-label="自定义">
        <svg width="13" height="13" viewBox="0 0 13 13" fill="none" stroke="currentColor" strokeWidth="2.400" aria-hidden="true">
          <path d="m12 12-6-6" />
          <path d="M2 3.500C1 6 4 8 6 6.500 8 5 7 1 4.500 1.500" strokeWidth="1.800" />
        </svg>
      </button>
    </div>
    <div className="flex min-w-0 flex-1 items-center gap-[3px] pl-1">
      <Icon size={14}><path d="M.5 2.500h15v11H.5z" fill="#e3e3e8" stroke="#aaa" /><path d="m3 5 4 3-4 3M8 11h5" stroke="#555" /></Icon>
      <TinyCaret className="text-[#888]" />
      <input type="text" aria-label="命令" placeholder="键入命令" className="ml-1 min-w-0 flex-1 text-[13px] leading-[20px] italic outline-none placeholder:text-[#999]" />
    </div>
  </div>
);

/* ---------- status bar ---------- */

const TOGGLES: { name: string; on?: boolean; d: string }[] = [
  { name: '推断约束', d: 'M7 2v9M2 6.500h10M9 9h5v3H9z' },
  { name: '捕捉模式', d: 'M3 4h1M6 4h1M9 4h1M3 7h1M6 7h1M3 10h7M12 3v9H5' },
  { name: '栅格显示', d: 'M1 3h14M1 6h14M1 9h14M1 12h14M3 2v12M7 2v12M11 2v12M14 2v12' },
  { name: '正交模式', on: true, d: 'M3 1v12h12M3 8h5v5' },
  { name: '极轴追踪', d: 'M12 5a5 5 0 1 0 1 5M8 9l5-6M8 9h6' },
  { name: '对象捕捉', on: true, d: 'M4 4h9v9H4zM2 2h4v4H2z' },
  { name: '三维对象捕捉', d: 'M4 4l2-2h8v8l-2 2H4zM2 11h4v3H2z' },
  { name: '对象捕捉追踪', d: 'M3 12 11 3M3 12h10' },
  { name: '动态UCS', d: 'M3 2v11h11M3 13 13 3M11 2l3 3' },
  { name: '动态输入', on: true, d: 'M5 4v6M2 7h7M8 8h6v3H8z' },
  { name: '线宽', on: true, d: 'M8 3v10M3 8h10M3 9h10' },
  { name: '透明度', on: true, d: 'M2 3h12v10H2zM2 6h12M2 10h12M5 3v10M9 3v10M12 3v10' },
  { name: '快捷特性', d: 'M4 3h8v10H4zM6 5h4' },
  { name: '选择循环', d: 'M2 3h5M4 1v5M6 6h5v5H6zM9 9h5v5H9z' },
  { name: '注释监视器', d: 'M6 2h4v4h4v4h-4v4H6v-4H2V6h4z' },
];

const ICON_FILL: Record<string, string> = { 对象捕捉: '#fff', 三维对象捕捉: '#ddd', 选择循环: '#7fc47a', 注释监视器: '#f4f4f4' };

const StatusBar = () => (
  <footer className="flex h-4 bg-linear-to-b from-[#999] to-[#747474] text-[#111]">
    <button type="button" className="flex w-[74px] shrink-0 items-center gap-[5px] pl-1 text-[10px] leading-4">
      比例
      <span className="font-['Liberation_Mono',monospace] text-[9px]">1:100</span>
      <Caret />
    </button>
    <output className="w-[97px] shrink-0 border-l border-[#777] bg-[#8f8f8f] pl-[2px] font-['Liberation_Mono',monospace] text-[9px] leading-4 whitespace-pre">
      55238, 33417, 0
    </output>
    <div className="flex">
      {TOGGLES.map(({ name, on, d }) => (
        <button
          key={name}
          type="button"
          aria-label={name}
          aria-pressed={!!on}
          className={clsx('flex w-[15px] shrink-0 items-center justify-center border-r border-[#777]', on ? 'bg-[#a8dcec]' : 'bg-[#a3a3a3]')}
        >
          <Icon size={13}><path d={d} stroke={name === '透明度' ? '#3d8fc0' : '#333'} fill={ICON_FILL[name] ?? 'none'} /></Icon>
        </button>
      ))}
    </div>
    <div className="mr-[253px] ml-auto flex items-center text-[10px] leading-4">
      <button type="button" className="h-4 w-[24px] border-x border-[#666] bg-[#999] px-[1px]">模型</button>
      <button type="button" aria-label="快速查看布局" className="flex h-4 w-[15px] items-center border-r border-[#666] bg-[#999]"><Icon size={14}><path d="M2 3h11v8H2zM1 13.500h14M6 5l4 4V5z" fill="#eee" /></Icon></button>
      <button type="button" aria-label="快速查看图形" className="flex h-4 w-[15px] items-center border-r border-[#666] bg-[#999]"><Icon size={14}><path d="M1 3h6v7H1zM9 3h6v7H9zM1 13.500h14" fill="#eee" /></Icon></button>
      <button type="button" className="ml-[16px] flex h-4 w-[43px] items-center gap-[3px] border-l border-[#666] bg-[#999] pl-[1px]">
        <Icon size={12}><path d="M8 2v6l-6 6M8 8l6 6M5 8l3-6 3 6" stroke="#eee" strokeWidth="1.500" /></Icon>
        <span className="font-['Liberation_Mono',monospace] text-[9px]">1:1</span>
        <Caret />
      </button>
      <button type="button" aria-label="注释可见性" className="flex h-4 w-[15px] items-center border-x border-[#666] bg-[#999]"><Icon size={13}><path d="M7 2v6l-5 6M7 8l5 6" stroke="#eee" strokeWidth="1.500" /><path d="m11 5 3 4" stroke="#f4dc5a" strokeWidth="3" /></Icon></button>
      <button type="button" aria-label="自动缩放" className="flex h-4 w-[15px] items-center"><Icon size={13}><path d="M7 2v6l-5 6M7 8l5 6" stroke="#bbb" strokeWidth="1.500" /></Icon></button>
    </div>
  </footer>
);

const SiteBadge = () => (
  <a href="http://www.civilcn.com" className="absolute right-[15px] bottom-0 flex h-[119px] w-[238px] items-center bg-white pl-[20px] text-black">
    <svg width="66" height="56" viewBox="0 0 66 56" aria-hidden="true" className="shrink-0">
      <path d="M36 7h9l7 7v27H36z" fill="#d6d8dc" />
      <path d="M7 31l8-4v15H8zM19 14l12-6v34H19zM38 23l9-4v22h-9z" fill="#1d469b" />
      <path d="m25 20 6-3v25h-6z" fill="#7e9acb" />
      <path d="M6 22C14 4 44-6 58 5c6 5 6 12 1 20 2-7 2-12-3-16C45 1 20 6 6 22z" fill="#95c11f" />
      <path d="M5 28c-6 10 0 21 15 21s34-9 43-26c-3 17-22 32-42 31C0 53-3 38 5 28z" fill="#1d469b" />
    </svg>
    <span className="flex flex-col gap-[2px] whitespace-nowrap">
      <strong className="text-[26px] leading-[26px] font-black italic">土木工程网</strong>
      <span className="text-[17px] leading-[18px] font-medium italic">www.civilcn.com</span>
    </span>
  </a>
);

const App = () => (
  <div className="relative flex min-h-screen flex-col overflow-hidden bg-[#6a6a6a] font-['Open_Sans','Noto_Sans_CJK_SC',sans-serif] text-[#222]">
    <TitleBar />
    <RibbonTabs />
    <button type="button" aria-label="应用程序菜单" className="absolute top-0 left-0 flex h-[28px] w-[28px] items-center border border-[#555] bg-linear-to-b from-[#d8d8d8] to-[#888]">
      <svg width="20" height="20" viewBox="0 0 20 20" aria-hidden="true">
        <path d="M1 17 9 2h3l-4 9z" fill="#e2402c" />
        <path d="m9 2 3 0 7 15-6-3-3-7z" fill="#b5160f" />
        <path d="m1 17 8-6 5 3-4-1z" fill="#c5281b" />
        <path d="m8 11 3-4 3 7z" fill="#8e110b" />
      </svg>
      <TinyCaret />
    </button>

    <div className="flex h-[86px] overflow-hidden border-b border-[#999] bg-linear-to-b from-[#d0d0d0] to-[#8c8c8c]">
      <DrawPanel />
      <ModifyPanel />
      <LayerPanel />
      <AnnotatePanel />
      <BlockPanel />
      <PropertiesPanel />
      <GroupPanel />
      <UtilityPanel />
      <ClipboardPanel />
    </div>

    <div className="flex h-[27px] items-end gap-1 border-b-2 border-[#6a6a6a] bg-linear-to-b from-[#888] to-[#a3a3a3] pl-[12px]">
      <div className="flex h-[22px] w-[116px] items-center justify-between bg-linear-to-b from-[#dadada] to-[#a8a8a8] pr-[15px] pl-[15px] text-[11px] [clip-path:polygon(8%_0,90%_0,100%_100%,0_100%)]">
        Drawing1*
        <button type="button" aria-label="关闭图形">
          <svg width="7" height="7" stroke="#777" strokeWidth="1.500" aria-hidden="true"><path d="m0 0 7 7M7 0 0 7" /></svg>
        </button>
      </div>
      <button type="button" aria-label="新图形" className="mb-[5px]">
        <svg width="19" height="13" fill="#777" stroke="#4e4e4e" aria-hidden="true">
          <path d="M.5.500h13c3 0 5 8 5 12H7C4 12 1 5 .5.500z" />
          <path d="M10 3.500v6M7 6.500h6" stroke="#ccc" />
        </svg>
      </button>
    </div>

    <div className="flex flex-1 bg-[#6a6a6a]">
      <Palette />
      <div className="ml-1 flex min-w-0 flex-1 flex-col">
        <div className="flex flex-1 pt-[1px]">
          <Canvas />
          <VerticalScroll />
        </div>
        <LayoutTabs />
        <div className="h-[5px] bg-[#606060]" />
        <CommandLine />
      </div>
    </div>
    <StatusBar />
    <SiteBadge />
  </div>
);

export default App;
